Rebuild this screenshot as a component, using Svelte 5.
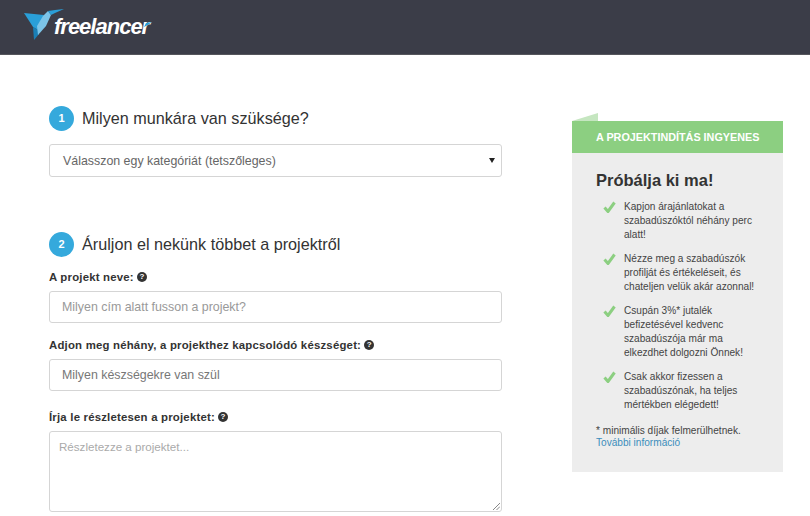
<script>
  const benefits = [
    ['Kapjon árajánlatokat a', 'szabadúszóktól néhány perc', 'alatt!'],
    ['Nézze meg a szabadúszók', 'profilját és értékeléseit, és', 'chateljen velük akár azonnal!'],
    ['Csupán 3%* jutalék', 'befizetésével kedvenc', 'szabadúszója már ma', 'elkezdhet dolgozni Önnek!'],
    ['Csak akkor fizessen a', 'szabadúszónak, ha teljes', 'mértékben elégedett!']
  ];
</script>

<div class="page">
  <header class="topbar">
    <div class="logo">
      <svg width="41" height="33" viewBox="0 0 41 33">
        <polygon points="0,5 20,7 14,22 9,19" fill="#2a9fd8" />
        <polygon points="9,19 14,22 15,26 10,32" fill="#1a7fb5" />
        <polygon points="19,8 24,3 27,7 22,18 14,27 13,18" fill="#7cc4e8" />
        <polygon points="24,3 31,2 40,1 31,5 27,7" fill="#2a9fd8" />
      </svg>
      <span class="wordmark">freelancer</span>
      <svg class="tail" width="8" height="5" viewBox="0 0 8 5"><polygon points="0,5 2,1 8,0 4,3" fill="#2a9fd8" /></svg>
    </div>
  </header>

  <div class="content">
    <main class="form">
      <section class="step first">
        <h2><span class="num">1</span>Milyen munkára van szüksége?</h2>
        <div class="select">
          <span>Válasszon egy kategóriát (tetszőleges)</span>
          <svg width="6" height="5" viewBox="0 0 6 5"><polygon points="0,0 6,0 3,5" fill="#222" /></svg>
        </div>
      </section>

      <section class="step second">
        <h2><span class="num">2</span>Áruljon el nekünk többet a projektről</h2>

        <div class="label name">A projekt neve: <span class="help">?</span></div>
        <div class="input placeholder">Milyen cím alatt fusson a projekt?</div>

        <div class="label skills">Adjon meg néhány, a projekthez kapcsolódó készséget: <span class="help">?</span></div>
        <div class="input typed">Milyen készségekre van szül</div>

        <div class="label details">Írja le részletesen a projektet: <span class="help">?</span></div>
        <div class="textarea placeholder">
          Részletezze a projektet...
          <svg class="grip" width="8" height="8" viewBox="0 0 8 8"><path d="M1 8 8 1M4.5 8 8 4.5" stroke="#888" fill="none" /></svg>
        </div>
      </section>
    </main>

    <aside class="side">
      <div class="ribbon">
        <span class="fold"></span>
        A PROJEKTINDÍTÁS <b>INGYENES</b>
      </div>
      <div class="panel">
        <h3>Próbálja ki ma!</h3>
        <ul>
          {#each benefits as lines}
            <li>
              <svg width="13" height="12" viewBox="0 0 13 12"><path d="M1.5 6.5 5 10.5 11.5 1.5" stroke="#8ccf81" stroke-width="3" fill="none" /></svg>
              <div>
                {#each lines as line}
                  <div>{line}</div>
                {/each}
              </div>
            </li>
          {/each}
        </ul>
        <p class="note">* minimális díjak felmerülhetnek.<br /><span class="more">További információ</span></p>
      </div>
    </aside>
  </div>
</div>

<style>
  :global(body) {
    margin: 0;
    background: #fff;
  }

  .page {
    width: 810px;
    height: 516px;
    overflow: hidden;
    font-family: "Liberation Sans", Arial, sans-serif;
    color: #333;
  }

  .topbar {
    height: 54px;
    background: #3b3d48;
    border-bottom: 1px solid #55565c;
    box-sizing: content-box;
    display: flex;
    align-items: flex-start;
  }

  .logo {
    display: flex;
    align-items: flex-start;
    margin: 8px 0 0 24px;
  }

  .wordmark {
    margin: 7px 0 0 -11px;
    font-size: 22px;
    line-height: 24px;
    font-weight: bold;
    font-style: italic;
    letter-spacing: -1px;
    color: #fff;
  }

  .tail {
    margin: 14px 0 0 -5px;
  }

  .content {
    display: flex;
    align-items: flex-start;
  }

  .form {
    width: 453px;
    margin-left: 49px;
  }

  .step h2 {
    display: flex;
    align-items: center;
    gap: 8px;
    height: 25px;
    margin: 0;
    font-size: 16.2px;
    font-weight: normal;
    color: #333;
  }

  .first {
    padding-top: 51px;
  }

  .second {
    padding-top: 55px;
  }

  .num {
    flex: none;
    width: 25px;
    height: 25px;
    border-radius: 50%;
    background: #35a9dc;
    color: #fff;
    font-size: 11px;
    font-weight: bold;
    line-height: 25px;
    text-align: center;
  }

  .select,
  .input,
  .textarea {
    box-sizing: border-box;
    border: 1px solid #d5d5d5;
    border-radius: 3px;
    font-size: 12.4px;
  }

  .select {
    display: flex;
    align-items: center;
    justify-content: space-between;
    height: 33px;
    margin-top: 13px;
    padding: 0 6px 0 13px;
    color: #666;
  }

  .label {
    display: flex;
    align-items: center;
    gap: 3px;
    height: 15px;
    font-size: 11.4px;
    font-weight: bold;
    letter-spacing: 0.2px;
    color: #333;
  }

  .name {
    margin-top: 12px;
  }

  .skills {
    margin-top: 14px;
  }

  .details {
    margin-top: 18px;
  }

  .help {
    width: 10px;
    height: 10px;
    border-radius: 50%;
    background: #333;
    color: #fff;
    font-size: 8px;
    line-height: 10px;
    text-align: center;
    letter-spacing: 0;
  }

  .input {
    height: 32px;
    margin-top: 7px;
    padding: 0 12px;
    line-height: 30px;
  }

  .placeholder {
    color: #999;
  }

  .typed {
    color: #777;
  }

  .textarea {
    position: relative;
    height: 81px;
    margin-top: 7px;
    padding: 7px 9px;
    font-size: 11.6px;
    line-height: 16px;
    color: #aaa;
  }

  .grip {
    position: absolute;
    right: 1px;
    bottom: 1px;
  }

  .side {
    width: 211px;
    margin: 66px 0 0 70px;
  }

  .ribbon {
    position: relative;
    height: 32px;
    background: #8ccf81;
    color: #fff;
    font-size: 10.8px;
    font-weight: bold;
    line-height: 32px;
    padding-left: 24px;
  }

  .fold {
    position: absolute;
    left: 0;
    top: -8px;
    width: 26px;
    height: 8px;
    background: #c5e6c0;
    clip-path: polygon(0 100%, 100% 0, 100% 100%);
  }

  .panel {
    height: 319px;
    box-sizing: border-box;
    background: #ededed;
    padding: 16px 24px 0;
  }

  .panel h3 {
    margin: 0 0 9px;
    font-size: 16.5px;
    line-height: 22px;
    font-weight: bold;
    color: #333;
  }

  .panel ul {
    list-style: none;
    margin: 0;
    padding: 0;
  }

  .panel li {
    display: flex;
    gap: 8px;
    margin: 0 0 10px 7px;
    font-size: 10.1px;
    line-height: 14px;
    color: #444;
    white-space: nowrap;
  }

  .panel li svg {
    flex: none;
    margin-top: 1px;
  }

  .note {
    margin: 13px 0 0;
    font-size: 10.1px;
    line-height: 12px;
    color: #444;
  }

  .more {
    color: #3c8dbc;
  }
</style>
